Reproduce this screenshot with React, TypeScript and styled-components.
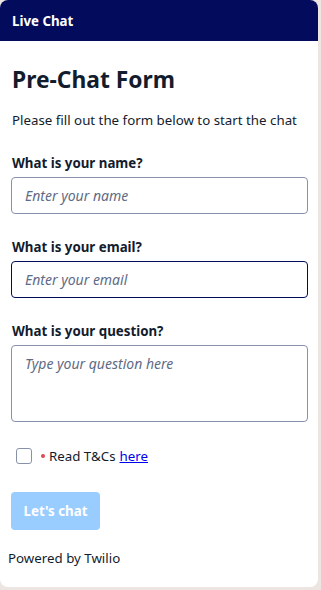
import React from "react";
import styled, { createGlobalStyle } from "styled-components";

const Global = createGlobalStyle`
  html, body { margin: 0; padding: 0; background: #ede5e1; }
  body { font-family: "Noto Sans", "Open Sans", sans-serif; color: #121c2d; }
  * { box-sizing: border-box; }
`;

const Panel = styled.div`
  width: 318px;
  height: 587px;
  background: #ffffff;
  border-radius: 8px;
  overflow: hidden;
  display: flex;
  flex-direction: column;
`;

const Header = styled.div`
  flex-shrink: 0;
  height: 41px;
  background: #030b5d;
  color: #ffffff;
  font-weight: 700;
  font-size: 13.3px;
  display: flex;
  align-items: center;
  padding: 0 12px;
`;

const Body = styled.div`
  padding: 23px 11px 0 11px;
  display: flex;
  flex-direction: column;
`;

const Title = styled.h1`
  margin: 0 0 0 1px;
  font-size: 22.8px;
  line-height: 32px;
  font-weight: 700;
  color: #121c2d;
`;

const Intro = styled.p`
  margin: 14px 0 0 1px;
  font-size: 13.3px;
  line-height: 20px;
  white-space: nowrap;
`;

const Field = styled.div`
  display: flex;
  flex-direction: column;
  margin-top: 23px;
`;

const Label = styled.label`
  font-size: 13.3px;
  font-weight: 700;
  line-height: 20px;
  margin: 0 0 4px 1px;
`;

const Input = styled.input<{ $focus?: boolean }>`
  width: 297px;
  height: 37px;
  border: 1px solid ${(p) => (p.$focus ? "#030b5d" : "#8891aa")};
  border-radius: 4px;
  padding: 0 13px;
  font-family: inherit;
  font-size: 14px;
  outline: none;
  &::placeholder { color: #606b85; font-style: italic; }
`;

const TextArea = styled.textarea`
  width: 297px;
  height: 77px;
  border: 1px solid #8891aa;
  border-radius: 4px;
  padding: 8px 13px;
  font-family: inherit;
  font-size: 14px;
  line-height: 20px;
  resize: none;
  outline: none;
  &::placeholder { color: #606b85; font-style: italic; }
`;

const CheckRow = styled.div`
  display: flex;
  align-items: center;
  height: 20px;
  margin: 24px 0 0 5px;
  font-size: 13.3px;
  line-height: 20px;
`;

const Box = styled.span`
  width: 16px;
  height: 16px;
  border: 1px solid #8891aa;
  border-radius: 3px;
  margin-right: 9px;
`;

const Dot = styled.span`
  width: 4px;
  height: 4px;
  border-radius: 50%;
  background: #e0474f;
  margin-right: 4px;
`;

const Link = styled.a`
  color: #0000ee;
  text-decoration: underline;
  margin-left: 4px;
`;

const Button = styled.button`
  margin-top: 26px;
  width: 89px;
  height: 38px;
  border: none;
  border-radius: 4px;
  background: #99cdff;
  color: #ffffff;
  font-family: inherit;
  font-weight: 700;
  font-size: 13.3px;
  padding: 0;
  align-self: flex-start;
`;

const Footer = styled.div`
  margin: 18px 0 0 8px;
  font-size: 13.3px;
  line-height: 20px;
`;

export default function App() {
  return (
    <>
      <Global />
      <Panel>
        <Header>Live Chat</Header>
        <Body>
          <Title>Pre-Chat Form</Title>
          <Intro>Please fill out the form below to start the chat</Intro>
          <Field>
            <Label>What is your name?</Label>
            <Input placeholder="Enter your name" />
          </Field>
          <Field>
            <Label>What is your email?</Label>
            <Input $focus placeholder="Enter your email" />
          </Field>
          <Field>
            <Label>What is your question?</Label>
            <TextArea placeholder="Type your question here" />
          </Field>
          <CheckRow>
            <Box />
            <Dot />
            Read T&amp;Cs<Link href="#">here</Link>
          </CheckRow>
          <Button>Let's chat</Button>
        </Body>
        <Footer>Powered by Twilio</Footer>
      </Panel>
    </>
  );
}
